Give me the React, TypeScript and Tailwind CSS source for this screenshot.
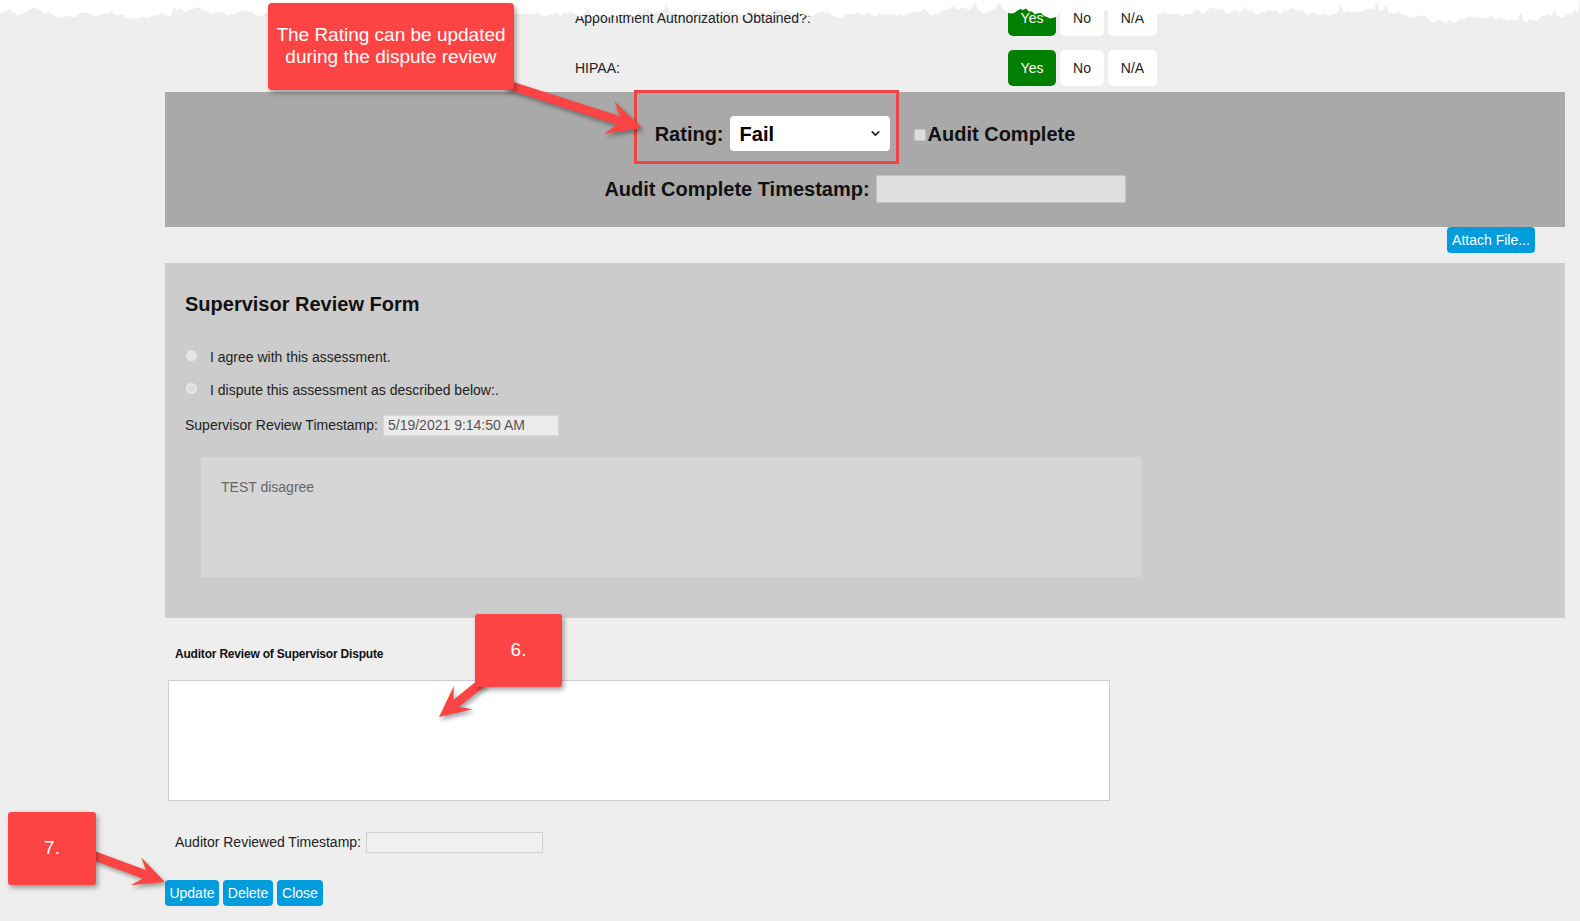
import React from 'react';
import { ChevronDown } from 'lucide-react';

// arrow polygon from tail (x1,y1) to tip (x2,y2)
function arrow(x1: number, y1: number, x2: number, y2: number, shaft = 4, headLen = 30, headW = 15) {
  const dx = x2 - x1;
  const dy = y2 - y1;
  const len = Math.hypot(dx, dy);
  const ux = dx / len;
  const uy = dy / len;
  const nx = -uy;
  const ny = ux;
  const bx = x2 - ux * headLen;
  const by = y2 - uy * headLen;
  const cx = x2 - ux * (headLen - 9);
  const cy = y2 - uy * (headLen - 9);
  const p = [
    [x1 + nx * shaft, y1 + ny * shaft],
    [cx + nx * shaft, cy + ny * shaft],
    [bx + nx * headW, by + ny * headW],
    [x2, y2],
    [bx - nx * headW, by - ny * headW],
    [cx - nx * shaft, cy - ny * shaft],
    [x1 - nx * shaft, y1 - ny * shaft],
  ];
  return p.map(([a, b]) => `${a.toFixed(1)},${b.toFixed(1)}`).join(' ');
}

// torn paper edge along the top
const tear = (() => {
  let s = 11;
  const r = () => (s = (s * 9301 + 49297) % 233280) / 233280;
  const pts = ['0,0'];
  let y = 12;
  for (let x = 0; x <= 1580; x += 3) {
    let base = 13;
    if (x > 1400) base = 17;
    else if (x > 1160) base = 12;
    else if (x > 520 && x < 1000) base = 12;
    y = y + (r() - 0.5) * 6 + (base - y) * 0.2;
    const dip = r() > 0.95 ? -7 : 0;
    pts.push(`${x},${Math.max(1, y + dip).toFixed(1)}`);
  }
  pts.push('1580,0');
  return pts.join(' ');
})();

const choiceBtn = 'h-[36px] rounded-[5px] flex items-center justify-center text-[14px]';

function ChoiceRow({ label }: { label: string }) {
  return (
    <div className="h-[36px] flex items-center">
      <div className="ml-[410px] w-[433px] text-[14px] text-[#222]">{label}</div>
      <div className="flex gap-[4px]">
        <div className={`${choiceBtn} w-[48px] bg-[#008000] text-white`}>Yes</div>
        <div className={`${choiceBtn} w-[44px] bg-white text-[#222]`}>No</div>
        <div className={`${choiceBtn} w-[49px] bg-white text-[#222]`}>N/A</div>
      </div>
    </div>
  );
}

export default function App() {
  return (
    <div className="relative w-[1580px] h-[921px] overflow-hidden bg-[#eeeeee] font-['Liberation_Sans',Arial,sans-serif] text-[#111]">
      <div className="pl-[165px] pr-[15px]">
        {/* yes / no questions */}
        <div className="flex flex-col gap-[14px]">
          <ChoiceRow label="Appointment Authorization Obtained?:" />
          <ChoiceRow label="HIPAA:" />
        </div>

        {/* rating band */}
        <div className="mt-[6px] h-[135px] bg-[#a9a9a9] pt-[24px] flex flex-col items-center">
          <div className="h-[35px] flex items-center">
            <span className="text-[20px] font-bold">Rating:</span>
            <div className="ml-[6px] w-[160px] h-[35px] bg-white rounded-[4px] flex items-center justify-between pl-[10px] pr-[8px]">
              <span className="text-[20px] font-bold text-black">Fail</span>
              <ChevronDown size={13} strokeWidth={3} className="text-[#222]" />
            </div>
            <div className="ml-[24px] w-[12px] h-[12px] bg-[#dddddd] border border-[#c8c8c8] rounded-[2px] mt-[2px]"></div>
            <span className="ml-[2px] text-[20px] font-bold">Audit Complete</span>
          </div>
          <div className="mt-[24px] h-[28px] flex items-center">
            <span className="text-[20px] font-bold">Audit Complete Timestamp:</span>
            <div className="ml-[6px] w-[250px] h-[28px] bg-[#dedede] border border-[#c4c4c4] rounded-[2px]"></div>
          </div>
        </div>

        <div className="flex justify-end pr-[30px]">
          <div className="w-[88px] h-[26px] bg-[#009cdc] text-white text-[14px] rounded-[4px] flex items-center justify-center">
            Attach File...
          </div>
        </div>

        {/* supervisor review */}
        <div className="mt-[10px] bg-[#cccccc] pt-[29px] pb-[41px]">
          <div className="pl-[20px] text-[20px] leading-[24px] font-bold text-[#111]">Supervisor Review Form</div>
          <div className="mt-[31px] pl-[20px] h-[20px] flex items-center text-[14px] text-[#222]">
            <span className="ml-[1px] mb-[4px] w-[11px] h-[11px] rounded-full bg-[#e6e6e6]"></span>
            <span className="ml-[13px]">I agree with this assessment.</span>
          </div>
          <div className="mt-[13px] pl-[20px] h-[20px] flex items-center text-[14px] text-[#222]">
            <span className="ml-[1px] mb-[4px] w-[11px] h-[11px] rounded-full bg-[#dcdcdc] border-[2px] border-[#e8e8e8]"></span>
            <span className="ml-[13px]">I dispute this assessment as described below:.</span>
          </div>
          <div className="mt-[15px] pl-[20px] h-[21px] flex items-center text-[14px] text-[#222]">
            <span>Supervisor Review Timestamp:</span>
            <div className="ml-[5px] w-[176px] h-[21px] bg-[#ebebeb] border border-[#d6d6d6] text-[#555] flex items-center pl-[4px]">
              5/19/2021 9:14:50 AM
            </div>
          </div>
          <div className="mt-[21px] ml-[36px] w-[940px] h-[120px] bg-[#d6d6d6] pl-[20px] pt-[20px] text-[14px] text-[#666]">
            TEST disagree
          </div>
        </div>

        {/* auditor review */}
        <div className="mt-[29px] pl-[10px] text-[12px] leading-[14px] font-bold tracking-[-0.2px] text-[#111]">
          Auditor Review of Supervisor Dispute
        </div>
        <div className="mt-[19px] ml-[3px] w-[942px] h-[121px] bg-white border border-[#cccccc]"></div>
        <div className="mt-[31px] pl-[10px] h-[21px] flex items-center text-[14px] text-[#222]">
          <span>Auditor Reviewed Timestamp:</span>
          <div className="ml-[5px] w-[177px] h-[21px] bg-[#f0f0f0] border border-[#cfcfcf]"></div>
        </div>
        <div className="mt-[27px] flex gap-[4px] text-[14px] text-white">
          <div className="w-[54px] h-[26px] bg-[#009cdc] rounded-[4px] flex items-center justify-center">Update</div>
          <div className="w-[50px] h-[26px] bg-[#009cdc] rounded-[4px] flex items-center justify-center">Delete</div>
          <div className="w-[46px] h-[26px] bg-[#009cdc] rounded-[4px] flex items-center justify-center">Close</div>
        </div>
      </div>

      {/* torn top edge */}
      <svg className="absolute left-0 top-0" width="1580" height="40">
        <polygon points={tear} fill="#ffffff" />
      </svg>

      {/* annotations */}
      <div className="absolute left-[634px] top-[90px] w-[265px] h-[74px] border-[3px] border-[#ef4444]"></div>

      <svg className="absolute left-0 top-0 pointer-events-none drop-shadow-[2px_3px_2px_rgba(0,0,0,0.35)]" width="1580" height="921">
        <polygon points={arrow(505, 84, 642, 128, 4.5, 34, 17)} fill="#fc4445" />
        <polygon points={arrow(484, 681, 439, 717, 4.5, 31, 15)} fill="#fc4445" />
        <polygon points={arrow(92, 855, 165, 882, 4.5, 31, 15)} fill="#fc4445" />
      </svg>

      <div className="absolute left-[268px] top-[3px] w-[246px] h-[87px] bg-[#fc4445] rounded-[4px] shadow-[2px_3px_5px_rgba(0,0,0,0.35)] flex items-center justify-center text-center text-white text-[19px] leading-[22px]">
        <div className="-mt-[2px]">
          The Rating can be updated
          <br />
          during the dispute review
        </div>
      </div>
      <div className="absolute left-[475px] top-[614px] w-[87px] h-[73px] bg-[#fc4445] rounded-[3px] shadow-[2px_3px_5px_rgba(0,0,0,0.35)] flex items-center justify-center text-white text-[19px]">
        6.
      </div>
      <div className="absolute left-[8px] top-[812px] w-[88px] h-[73px] bg-[#fc4445] rounded-[3px] shadow-[2px_3px_5px_rgba(0,0,0,0.35)] flex items-center justify-center text-white text-[19px]">
        7.
      </div>
    </div>
  );
}
